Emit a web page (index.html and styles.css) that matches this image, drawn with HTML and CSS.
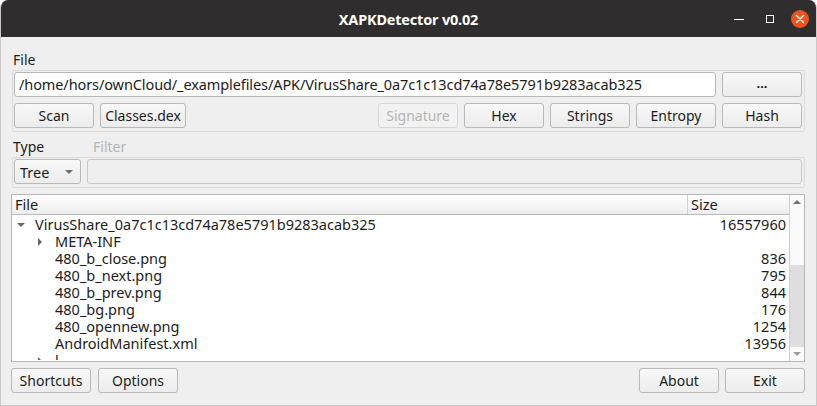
FILE: index.html
```html
<!DOCTYPE html>
<html>
<head>
<meta charset="utf-8">
<link rel="stylesheet" href="styles.css">
</head>
<body>
<div class="window">
  <div class="titlebar">
    <div class="title">XAPKDetector v0.02</div>
    <div class="controls">
      <span class="ctl min"></span>
      <span class="ctl max"></span>
      <span class="ctl close">
        <svg width="10" height="10" viewBox="0 0 10 10"><path d="M1.5 1.5 L8.5 8.5 M8.5 1.5 L1.5 8.5" stroke="#fff" stroke-width="1.4" stroke-linecap="round"/></svg>
      </span>
    </div>
  </div>
  <div class="content">
    <div class="label">File</div>
    <div class="frame frame-file">
      <div class="row">
        <div class="input path">/home/hors/ownCloud/_examplefiles/APK/VirusShare_0a7c1c13cd74a78e5791b9283acab325</div>
        <div class="btn w80 dots">...</div>
      </div>
      <div class="row">
        <div class="btn w80">Scan</div>
        <div class="btn w86">Classes.dex</div>
        <div class="spacer"></div>
        <div class="btn w80 disabled">Signature</div>
        <div class="btn w80">Hex</div>
        <div class="btn w80">Strings</div>
        <div class="btn w80">Entropy</div>
        <div class="btn w80">Hash</div>
      </div>
    </div>
    <div class="labels">
      <div class="label type-label">Type</div>
      <div class="label disabled-label">Filter</div>
    </div>
    <div class="frame frame-filter">
      <div class="row">
        <div class="combo">Tree<span class="caret"></span></div>
        <div class="input filter disabled-input"></div>
      </div>
    </div>
    <div class="tree">
      <div class="tree-main">
        <div class="header">
          <div class="hcell hfile">File</div>
          <div class="hcell hsize">Size</div>
        </div>
        <div class="rows">
          <div class="trow"><span class="name l0"><span class="arrow down"></span>VirusShare_0a7c1c13cd74a78e5791b9283acab325</span><span class="size">16557960</span></div>
          <div class="trow"><span class="name l1"><span class="arrow right"></span>META-INF</span><span class="size"></span></div>
          <div class="trow"><span class="name l1">480_b_close.png</span><span class="size">836</span></div>
          <div class="trow"><span class="name l1">480_b_next.png</span><span class="size">795</span></div>
          <div class="trow"><span class="name l1">480_b_prev.png</span><span class="size">844</span></div>
          <div class="trow"><span class="name l1">480_bg.png</span><span class="size">176</span></div>
          <div class="trow"><span class="name l1">480_opennew.png</span><span class="size">1254</span></div>
          <div class="trow"><span class="name l1">AndroidManifest.xml</span><span class="size">13956</span></div>
          <div class="trow last"><span class="name l1"><span class="arrow right"></span>l</span><span class="size"></span></div>
        </div>
      </div>
      <div class="scrollbar">
        <div class="sb-btn"><span class="tri up"></span></div>
        <div class="sb-track">
          <div class="sb-space"></div>
          <div class="sb-handle"></div>
        </div>
        <div class="sb-btn"><span class="tri dn"></span></div>
      </div>
    </div>
    <div class="row bottom">
      <div class="btn w80">Shortcuts</div>
      <div class="btn w80">Options</div>
      <div class="spacer"></div>
      <div class="btn w80">About</div>
      <div class="btn w80">Exit</div>
    </div>
  </div>
</div>
</body>
</html>
```

FILE: styles.css
```css
* { box-sizing: border-box; }
html, body { margin: 0; padding: 0; background: #ffffff; }
body {
  font-family: "Noto Sans", "Open Sans", sans-serif;
  font-size: 14px;
  color: #1c1c1c;
}
.window {
  width: 817px;
  height: 406px;
  background: #efefef;
  border-radius: 8px 8px 0 0;
  overflow: hidden;
  display: flex;
  flex-direction: column;
  border-left: 1px solid #c9c9c9;
  border-right: 1px solid #c9c9c9;
  border-bottom: 1px solid #c9c9c9;
}
.titlebar {
  height: 37px;
  background: #2f2d2d;
  color: #ffffff;
  display: flex;
  align-items: center;
  justify-content: center;
  position: relative;
  flex: none;
  margin: 0 -1px;
}
.title {
  font-family: "Noto Sans", sans-serif;
  font-weight: bold;
  font-size: 14.5px;
  letter-spacing: -0.2px;
}
.controls {
  position: absolute;
  right: 8px;
  top: 0;
  height: 37px;
  display: flex;
  align-items: center;
}
.ctl {
  display: flex;
  align-items: center;
  justify-content: center;
}
.ctl.min { width: 10px; height: 1px; background: #fff; margin-right: 22px; margin-top: 2px; }
.ctl.max { width: 8px; height: 8px; border: 1px solid #fff; margin-right: 17px; }
.ctl.close { width: 18px; height: 18px; border-radius: 50%; background: #e95420; }
.content {
  flex: 1;
  padding: 14px 11px 0 11px;
  display: flex;
  flex-direction: column;
}
.label { height: 18px; line-height: 18px; padding-left: 1px; }
.frame {
  border: 1px solid #dadada;
  border-radius: 2px;
  padding: 1px 2px 2px 1px;
  display: flex;
  flex-direction: column;
  gap: 6px;
}
.frame-file { margin-top: 1px; height: 62px; }
.row { display: flex; gap: 6px; align-items: center; }
.spacer { flex: 1; }
.input {
  height: 25px;
  background: #ffffff;
  border: 1px solid #b7b7b7;
  border-radius: 3px;
  padding: 0 4px;
  line-height: 23px;
  white-space: nowrap;
  overflow: hidden;
}
.path { flex: 1; font-size: 14.5px; letter-spacing: -0.1px; }
.btn {
  height: 25px;
  border: 1px solid #b9b9b9;
  border-radius: 3px;
  background: linear-gradient(#f8f8f8, #ececec);
  display: flex;
  align-items: center;
  justify-content: center;
  flex: none;
}
.w80 { width: 80px; }
.w86 { width: 86px; }
.dots { font-weight: bold; font-size: 13px; padding-bottom: 3px; }
.btn.disabled { color: #b4b4b4; border-color: #d6d6d6; background: #f2f2f2; }
.labels { display: flex; margin-top: 6px; height: 18px; align-items: center; }
.type-label { width: 80px; }
.disabled-label { color: #b4b4b4; }
.frame-filter { height: 31px; padding: 1px 2px 1px 1px; margin-top: 1px; }
.combo {
  width: 67px;
  height: 25px;
  border: 1px solid #b9b9b9;
  border-radius: 3px;
  background: linear-gradient(#f8f8f8, #ececec);
  display: flex;
  align-items: center;
  padding-left: 5px;
  position: relative;
  flex: none;
  font-size: 14.5px;
}
.caret {
  position: absolute;
  right: 7px;
  top: 10px;
  width: 0; height: 0;
  border-left: 4px solid transparent;
  border-right: 4px solid transparent;
  border-top: 4px solid #6c6c6c;
}
.filter { flex: 1; }
.disabled-input { background: #efefef; border-color: #c8c8c8; }
.tree {
  margin-top: 6px;
  height: 168px;
  border: 1px solid #b7b7b7;
  background: #ffffff;
  display: flex;
  margin-left: -1px;
}
.tree-main { flex: 1; display: flex; flex-direction: column; overflow: hidden; }
.header {
  height: 20px;
  display: flex;
  background: linear-gradient(#ffffff, #ededed);
  border-bottom: 1px solid #b9b9b9;
  flex: none;
}
.hcell { line-height: 19px; padding-left: 3px; font-size: 14.5px; }
.hfile { width: 676px; border-right: 1px solid #d2d2d2; }
.hsize { flex: 1; }
.rows { padding-top: 1px; }
.trow {
  height: 17px;
  line-height: 17px;
  display: flex;
  align-items: center;
  white-space: nowrap;
  font-size: 14.5px;
}
.trow.last { height: 8px; overflow: hidden; align-items: flex-start; }
.name { flex: 1; display: flex; align-items: center; position: relative; height: 17px; }
.l0 { padding-left: 23px; }
.l1 { padding-left: 43px; }
.size { width: 100px; text-align: right; padding-right: 3px; }
.arrow { position: absolute; width: 0; height: 0; }
.arrow.down {
  left: 5px; top: 7px;
  border-left: 4px solid transparent;
  border-right: 4px solid transparent;
  border-top: 4px solid #666;
}
.arrow.right {
  left: 26px; top: 5px;
  border-top: 4px solid transparent;
  border-bottom: 4px solid transparent;
  border-left: 4px solid #666;
}
.scrollbar {
  width: 15px;
  border-left: 1px solid #d0d0d0;
  display: flex;
  flex-direction: column;
  background: #f8f8f8;
  flex: none;
}
.sb-btn { height: 14px; display: flex; align-items: center; justify-content: center; background: #fbfbfb; }
.tri { width: 0; height: 0; border-left: 4px solid transparent; border-right: 4px solid transparent; }
.tri.up { border-bottom: 4px solid #707070; }
.tri.dn { border-top: 4px solid #9a9a9a; }
.sb-track { flex: 1; display: flex; flex-direction: column; background: #fafafa; }
.sb-space { height: 57px; border-bottom: 1px solid #e0e0e0; }
.sb-handle { flex: 1; background: #dedede; }
.bottom { margin-top: 6px; margin-left: -1px; height: 25px; }
.bottom .btn { width: 80px; }
.bottom .btn:nth-child(2) { margin-left: 1px; }
```
